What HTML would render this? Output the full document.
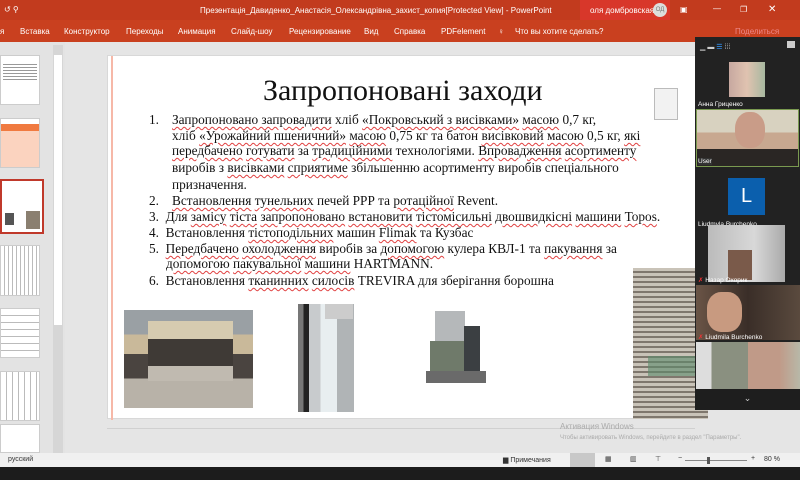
<!DOCTYPE html>
<html><head><meta charset="utf-8"><style>
*{margin:0;padding:0;box-sizing:border-box}
body{width:800px;height:480px;overflow:hidden;background:#e5e5e5;font-family:"Liberation Sans","DejaVu Sans",sans-serif;position:relative}
.a{position:absolute}
.tb{left:0;top:0;width:800px;height:20px;background:#c23b1e;color:#fff;font-size:8px}
.rb{left:0;top:20px;width:800px;height:22px;background:#c9401f;color:#fff;font-size:8px}
.rb span{position:absolute;top:7px}
.slide{left:107px;top:55px;width:600px;height:364px;background:#fff;border:1px solid #d8d8d8}
.ser{font-family:"Liberation Serif",serif;color:#111}
.li{font-size:13.3px;position:absolute;white-space:nowrap;left:0;}
.u{text-decoration:underline wavy #e04040;text-decoration-thickness:1px;text-underline-offset:2px}
.th{background:#fff;border:1px solid #ccc}
.zp{left:695px;top:37px;width:105px;height:373px;background:#222}
.nm{color:#fff;font-size:6.5px;position:absolute}
</style></head><body>
<div class="a tb">
<span class="a" style="left:4px;top:5px">↺ ⚲</span>
<span class="a" style="left:200px;top:6px">Презентація_Давиденко_Анастасія_Олександрівна_захист_копия[Protected View] - PowerPoint</span>
<div class="a" style="left:580px;top:0;width:90px;height:22px;background:#d8372a"></div>
<span class="a" style="left:590px;top:6px">оля домбровская</span>
<div class="a" style="left:653px;top:3px;width:14px;height:14px;border-radius:50%;background:#ddd;color:#777;font-size:6px;text-align:center;line-height:14px">ОД</div>
<span class="a" style="left:680px;top:5px">▣</span><span class="a" style="left:713px;top:4px">—</span><span class="a" style="left:740px;top:5px">❐</span><span class="a" style="left:768px;top:4px;font-size:10px">✕</span>
</div>
<div class="a rb">
<span style="left:0">я</span><span style="left:20px">Вставка</span><span style="left:64px">Конструктор</span><span style="left:126px">Переходы</span><span style="left:178px">Анимация</span><span style="left:231px">Слайд-шоу</span><span style="left:289px">Рецензирование</span><span style="left:364px">Вид</span><span style="left:394px">Справка</span><span style="left:441px">PDFelement</span><span style="left:498px">♀</span><span style="left:515px">Что вы хотите сделать?</span><span style="left:735px;color:#e88">Поделиться</span>
</div>
<!-- left pane -->
<div class="a" style="left:0;top:42px;width:65px;height:411px;background:#e3e3e3"></div>
<div class="a th" style="left:0;top:55px;width:40px;height:50px"><div style="margin:6px 2px;height:20px;background:repeating-linear-gradient(#fff 0 2px,#999 2px 3px)"></div></div>
<div class="a th" style="left:0;top:118px;width:40px;height:50px;background:linear-gradient(#fff 0 5px,#f07a40 5px 12px,#fbd3bf 12px)"></div>
<div class="a" style="left:0;top:179px;width:44px;height:55px;border:2px solid #c0392b;background:#fff"><div class="a" style="left:24px;top:30px;width:14px;height:18px;background:#8a7f70"></div><div class="a" style="left:3px;top:32px;width:9px;height:12px;background:#555"></div></div>
<div class="a th" style="left:0;top:245px;width:40px;height:51px;background:repeating-linear-gradient(90deg,#fff 0 3px,#bbb 3px 4px)"></div>
<div class="a th" style="left:0;top:308px;width:40px;height:50px;background:repeating-linear-gradient(#fff 0 6px,#bbb 6px 7px)"></div>
<div class="a th" style="left:0;top:371px;width:40px;height:50px;background:repeating-linear-gradient(90deg,#fff 0 5px,#bbb 5px 6px)"></div>
<div class="a th" style="left:0;top:424px;width:40px;height:29px"></div>
<div class="a" style="left:53px;top:45px;width:10px;height:408px;background:#d6d6d6"></div>
<div class="a" style="left:54px;top:55px;width:8px;height:270px;background:#fff"></div>
<!-- slide -->
<div class="a slide">
<div class="a" style="left:3px;top:0;width:2px;height:364px;background:#f6b8a8"></div>
<div class="a ser" style="left:155px;top:18px;font-size:30px;white-space:nowrap">Запропоновані заходи</div>
<div class="a" style="left:546px;top:32px;width:24px;height:32px;background:#f2f2f2;border:1px solid #bbb"></div>
<div class="a ser" style="left:0;top:0">
<div class="li" style="left:41px;top:56px">1.</div>
<div class="li" style="left:64px;top:56px"><span class="u">Запропоновано запровадити</span> хліб <span class="u">«Покровський з висівками»</span> <span class="u">масою</span> 0,7 кг,</div>
<div class="li" style="left:64px;top:72px">хліб <span class="u">«Урожайний пшеничний»</span> <span class="u">масою</span> 0,75 кг та батон <span class="u">висівковий</span> <span class="u">масою</span> 0,5 кг, <span class="u">які</span></div>
<div class="li" style="left:64px;top:87px"><span class="u">передбачено</span> <span class="u">готувати</span> за <span class="u">традиційними</span> технологіями. <span class="u">Впровадження</span> <span class="u">асортименту</span></div>
<div class="li" style="left:64px;top:104px">виробів з <span class="u">висівками</span> <span class="u">сприятиме</span> збільшенню асортименту виробів спеціального</div>
<div class="li" style="left:64px;top:121px">призначення.</div>
<div class="li" style="left:41px;top:137px">2.</div>
<div class="li" style="left:64px;top:137px"><span class="u">Встановлення</span> <span class="u">тунельних</span> печей РРР та <span class="u">ротаційної</span> Revent.</div>
<div class="li" style="left:41px;top:153px">3.&nbsp; Для <span class="u">замісу</span> <span class="u">тіста</span> <span class="u">запропоновано</span> <span class="u">встановити</span> <span class="u">тістомісильні</span> <span class="u">двошвидкісні</span> <span class="u">машини</span> <span class="u">Topos</span>.</div>
<div class="li" style="left:41px;top:169px">4.&nbsp; Встановлення <span class="u">тістоподільних</span> машин <span class="u">Flimak</span> та Кузбас</div>
<div class="li" style="left:41px;top:185px">5.&nbsp; <span class="u">Передбачено</span> <span class="u">охолодження</span> виробів за <span class="u">допомогою</span> кулера КВЛ-1 та <span class="u">пакування</span> за</div>
<div class="li" style="left:58px;top:200px"><span class="u">допомогою</span> <span class="u">пакувальної</span> <span class="u">машини</span> HARTMANN.</div>
<div class="li" style="left:41px;top:217px">6.&nbsp; Встановлення <span class="u">тканинних</span> <span class="u">силосів</span> TREVIRA для зберігання борошна</div>
</div>
<div class="a" style="left:16px;top:254px;width:129px;height:98px;background:linear-gradient(#9aa0a4 0 25%,#c9b99a 25% 45%,#4a4440 45% 70%,#b8b2a8 70%)"></div>
<div class="a" style="left:40px;top:265px;width:85px;height:60px;background:linear-gradient(#d6cbb0 0 30%,#3f3a36 30% 75%,#c0bab0 75%)"></div>
<div class="a" style="left:190px;top:248px;width:56px;height:108px;background:linear-gradient(90deg,#777 0 10%,#222 10% 20%,#c8cbcd 20% 40%,#e8eef0 40% 70%,#b0b4b6 70%)"></div>
<div class="a" style="left:217px;top:248px;width:28px;height:15px;background:#ccc"></div>
<div class="a" style="left:327px;top:255px;width:30px;height:30px;background:#b5b8ba"></div>
<div class="a" style="left:322px;top:285px;width:45px;height:30px;background:#6f7a6a"></div>
<div class="a" style="left:356px;top:270px;width:16px;height:45px;background:#3b3f42"></div>
<div class="a" style="left:318px;top:315px;width:60px;height:12px;background:#6a6a6a"></div>
<div class="a" style="left:525px;top:212px;width:75px;height:151px;background:repeating-linear-gradient(#c9c3b8 0 3px,#7f776d 3px 5px)"></div>
<div class="a" style="left:540px;top:300px;width:50px;height:20px;background:#5b8a6a;opacity:.6"></div>
</div>
<div class="a" style="left:107px;top:428px;width:588px;height:1px;background:#d0d0d0"></div>
<div class="a" style="left:560px;top:422px;color:#aaa;font-size:8px">Активация Windows</div>
<div class="a" style="left:560px;top:435px;color:#aaa;font-size:6px">Чтобы активировать Windows, перейдите в раздел "Параметры".</div>
<!-- status -->
<div class="a" style="left:0;top:453px;width:800px;height:14px;background:#f0f0f0;font-size:7px;color:#333">
<span class="a" style="left:8px;top:3px">русский</span>
<span class="a" style="left:503px;top:3px">▆ Примечания</span>
<div class="a" style="left:570px;top:0;width:25px;height:14px;background:#c8c8c8"></div>
<span class="a" style="left:605px;top:2px">▦</span><span class="a" style="left:630px;top:2px">▥</span><span class="a" style="left:655px;top:2px">⊤</span>
<span class="a" style="left:678px;top:2px">−</span><div class="a" style="left:685px;top:7px;width:62px;height:1px;background:#888"></div><div class="a" style="left:707px;top:4px;width:3px;height:7px;background:#555"></div>
<span class="a" style="left:751px;top:2px">+</span><span class="a" style="left:764px;top:3px">80 %</span>
</div>
<div class="a" style="left:0;top:467px;width:800px;height:13px;background:#1c1c1c"></div>
<!-- zoom panel -->
<div class="a zp">
<div class="a" style="left:5px;top:6px;color:#ccc;font-size:7px">▁ ▬ <span style="color:#39f">☰</span> ⁞⁞⁞</div>
<div class="a" style="left:92px;top:4px;width:8px;height:7px;background:#ccc"></div>
<div class="a" style="left:34px;top:25px;width:36px;height:35px;background:linear-gradient(90deg,#c7a8a0,#e0c3b0 50%,#a7b8a0)"></div>
<div class="nm" style="left:3px;top:64px">Анна Гриценко</div>
<div class="a" style="left:1px;top:72px;width:103px;height:58px;border:1px solid #7a9a50;background:linear-gradient(180deg,#d8d2c0 0 40%,#c8a890 40% 70%,#2a2624 70%)"></div>
<div class="a" style="left:40px;top:75px;width:30px;height:36px;border-radius:45%;background:#c99c88"></div>
<div class="nm" style="left:3px;top:121px;background:#333">User</div>
<div class="a" style="left:33px;top:141px;width:37px;height:37px;background:#0b5fad;color:#fff;font-size:20px;text-align:center;line-height:37px">L</div>
<div class="nm" style="left:3px;top:184px">Liudmyla Burchenko</div>
<div class="a" style="left:13px;top:188px;width:77px;height:57px;background:linear-gradient(90deg,#bbb,#d8d8d8 60%,#aaa)"></div>
<div class="a" style="left:33px;top:213px;width:24px;height:30px;background:#7a5a4a"></div>
<div class="nm" style="left:3px;top:239px"><span style="color:#e33">✗</span> Назар Охорик</div>
<div class="a" style="left:1px;top:248px;width:104px;height:55px;background:linear-gradient(90deg,#6a5446,#3a2e28 50%,#5a4a3e)"></div>
<div class="a" style="left:12px;top:255px;width:35px;height:40px;border-radius:40%;background:#c89a80"></div>
<div class="nm" style="left:3px;top:296px"><span style="color:#e33">✗</span> Liudmila Burchenko</div>
<div class="a" style="left:1px;top:305px;width:104px;height:47px;background:linear-gradient(90deg,#ddd 0 15%,#8a9080 15% 50%,#c09a88 50% 80%,#b8b8a8)"></div>
<div class="a" style="left:0;top:352px;width:105px;height:21px;background:#1e1e1e;color:#ccc;font-size:9px;text-align:center;line-height:18px">⌄</div>
</div>
</body></html>
